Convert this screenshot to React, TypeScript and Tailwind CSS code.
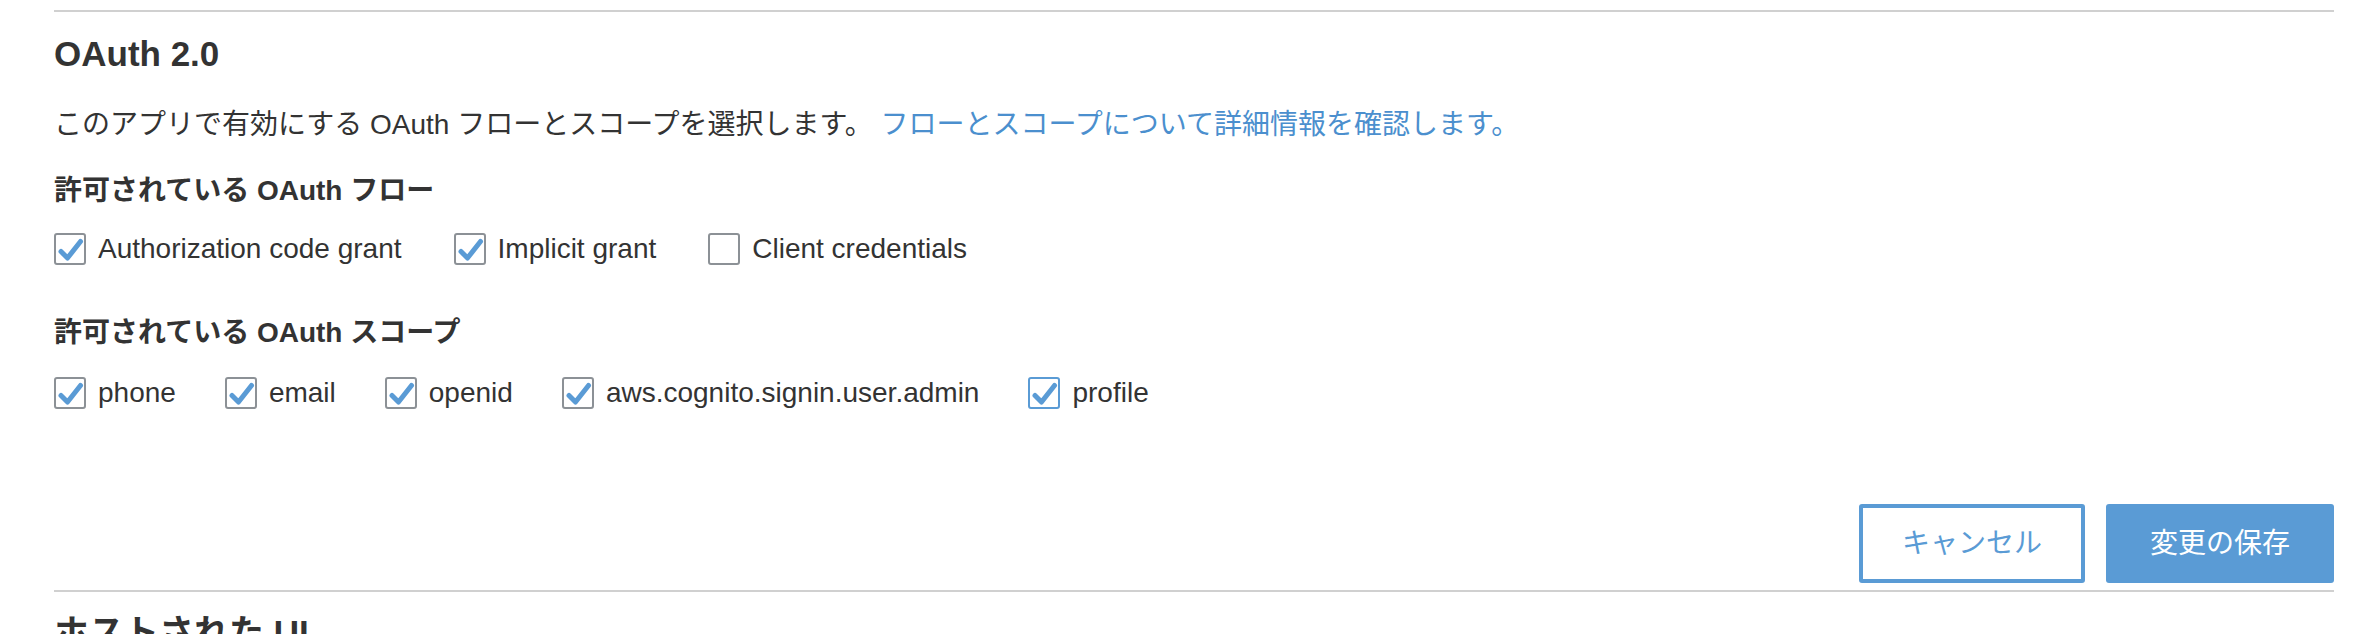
import React from "react";

const FONT = { fontFamily: '"Liberation Sans", "Noto Sans CJK JP", sans-serif' };

function Box({ checked, focus }: { checked: boolean; focus?: boolean }) {
  return (
    <span
      className={`flex h-[32px] w-[32px] shrink-0 items-center justify-center rounded-[3px] border-2 bg-white ${
        focus ? "border-[#5a9bd5]" : "border-[#8c9196]"
      }`}
    >
      {checked && (
        <svg width="28" height="28" viewBox="0 0 28 28">
          <path
            d="M5 16.5 L11.5 23 L24.5 6.5"
            fill="none"
            stroke="#5a9bd5"
            strokeWidth="5"
            strokeLinecap="round"
            strokeLinejoin="round"
          />
        </svg>
      )}
    </span>
  );
}

function Item({
  label,
  checked,
  focus,
  wide,
}: {
  label: string;
  checked: boolean;
  focus?: boolean;
  wide?: boolean;
}) {
  return (
    <label className={`flex h-[40px] items-center gap-[12px] ${wide ? "mr-[52px]" : "mr-[49px]"}`}>
      <Box checked={checked} focus={focus} />
      <span className="text-[28px] leading-[40px] text-[#333]">{label}</span>
    </label>
  );
}

export default function App() {
  return (
    <div className="h-[634px] overflow-hidden bg-white pl-[54px] pr-[40px] pt-[10px] text-[#333]" style={FONT}>
      <div className="border-t-2 border-[#d0d0d0]" />
      <h2 className="mt-[22px] text-[35px] font-bold leading-[40px] text-[#333]">OAuth 2.0</h2>
      <p className="mt-[31px] text-[28px] leading-[40px]">
        このアプリで有効にする OAuth フローとスコープを選択します。{" "}
        <a className="text-[#4b8fce]">フローとスコープについて詳細情報を確認します。</a>
      </p>
      <h3 className="mt-[26px] text-[28px] font-bold leading-[40px]">許可されている OAuth フロー</h3>
      <div className="mt-[18px] flex">
        <Item label="Authorization code grant" checked wide />
        <Item label="Implicit grant" checked wide />
        <Item label="Client credentials" checked={false} wide />
      </div>
      <h3 className="mt-[44px] text-[28px] font-bold leading-[40px]">許可されている OAuth スコープ</h3>
      <div className="mt-[20px] flex">
        <Item label="phone" checked />
        <Item label="email" checked />
        <Item label="openid" checked />
        <Item label="aws.cognito.signin.user.admin" checked />
        <Item label="profile" checked focus />
      </div>
      <div className="mt-[91px] flex justify-end gap-[21px]">
        <button className="flex h-[79px] w-[226px] items-center justify-center rounded-[3px] border-4 border-[#5a9bd5] bg-white text-[28px] text-[#5a9bd5]">
          キャンセル
        </button>
        <button className="flex h-[79px] w-[228px] items-center justify-center rounded-[3px] bg-[#5a9bd5] text-[28px] text-white">
          変更の保存
        </button>
      </div>
      <div className="mt-[7px] border-t-2 border-[#d0d0d0]" />
      <h2 className="mt-[21px] text-[35px] font-bold leading-[40px] text-[#333]">ホストされた UI</h2>
    </div>
  );
}
